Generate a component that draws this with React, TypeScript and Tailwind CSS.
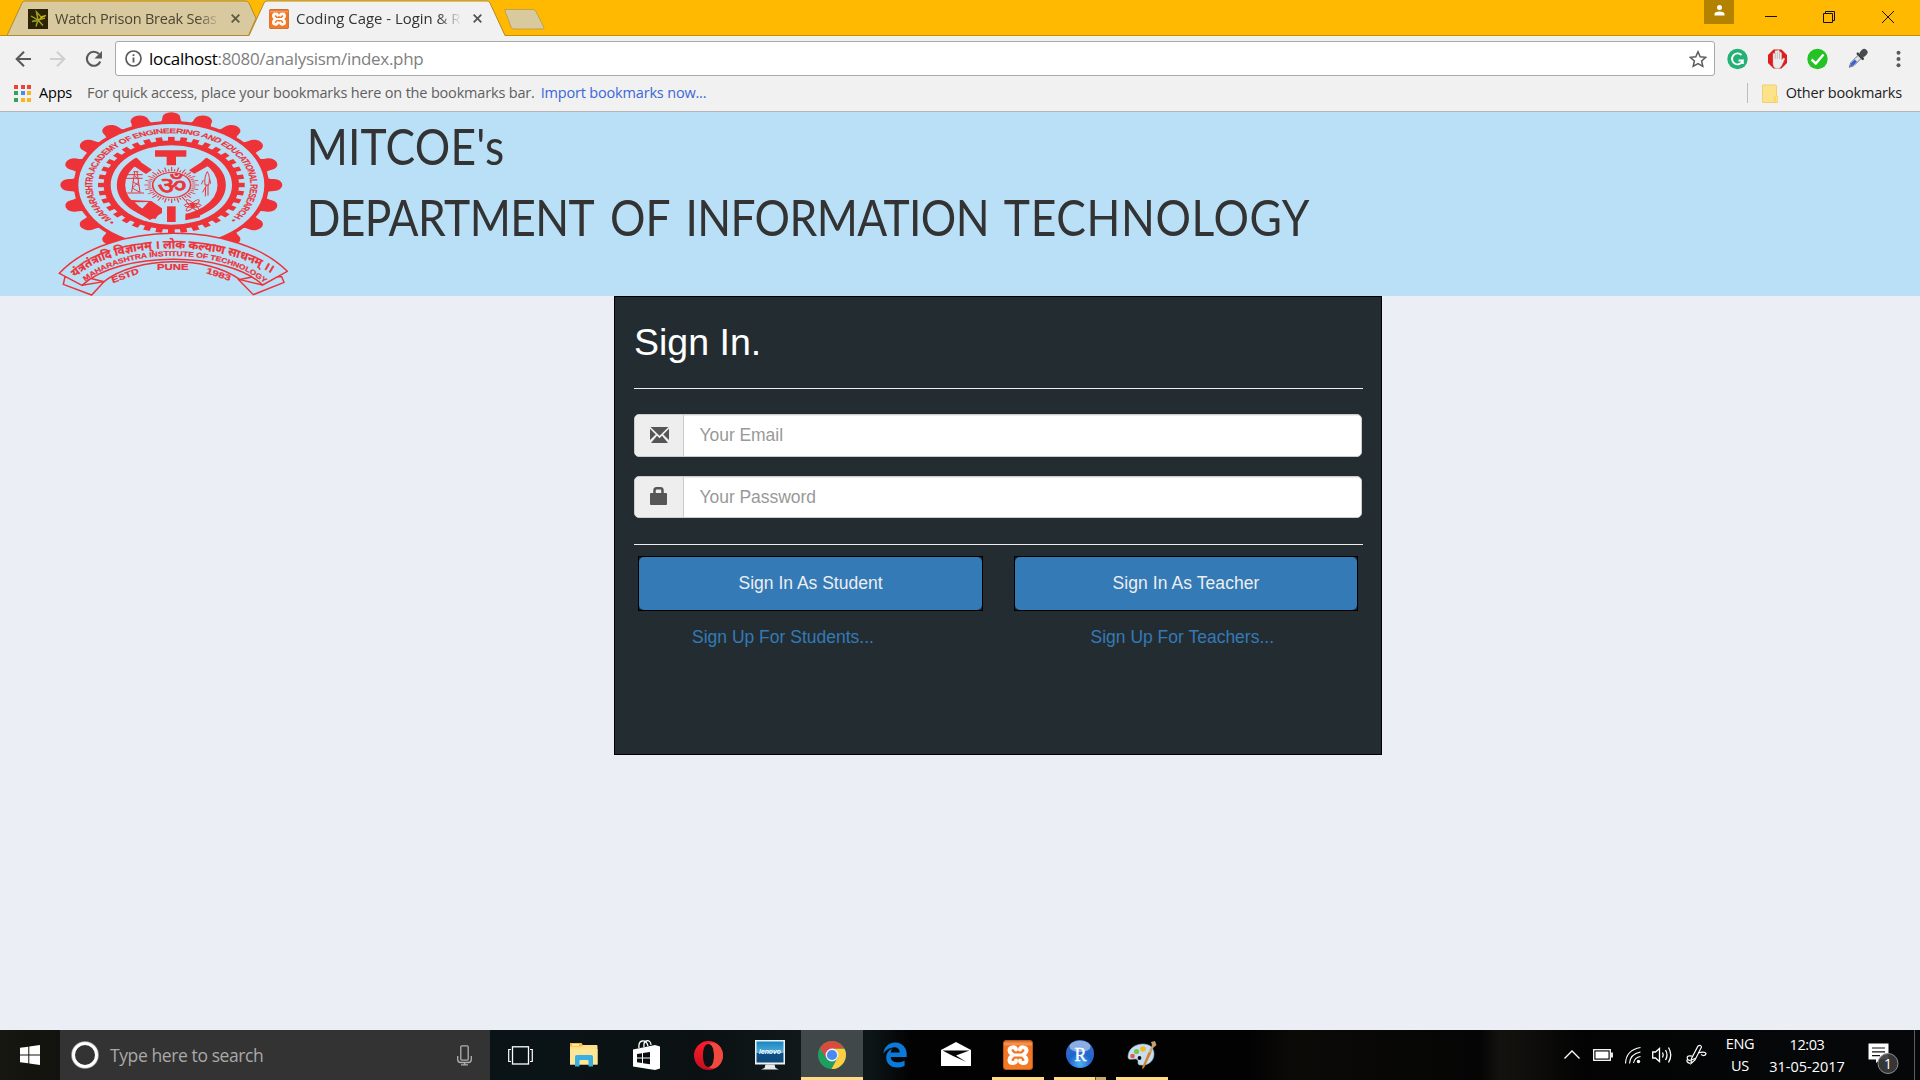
import React from "react";

const tabFade = "[mask-image:linear-gradient(to_right,black_84%,transparent_98%)]";

function XamppMark({ size, id }: { size: number; id: string }) {
  return (
    <svg width={size} height={size} viewBox="0 0 30 30">
      <defs>
        <linearGradient id={id} x1="0" y1="0" x2="0" y2="1">
          <stop offset="0" stopColor="#d4621c" />
          <stop offset="0.12" stopColor="#f9995a" />
          <stop offset="0.2" stopColor="#f47320" />
          <stop offset="1" stopColor="#f47a26" />
        </linearGradient>
      </defs>
      <rect x="0.5" y="0.5" width="29" height="29" rx="2.5" fill={`url(#${id})`} stroke="#b9591a" />
      <g stroke="#fff" strokeLinecap="round" fill="none">
        <path d="M13 9.500C13 6.500 6.500 6.500 6.500 10.500C6.500 13.500 9.500 13.500 9.500 15C9.500 16.500 6.500 16.500 6.500 20C6.500 24 13 24 13 20.500" strokeWidth="4" />
        <path d="M17 9.500C17 6.500 23.500 6.500 23.500 10.500C23.500 13.500 20.500 13.500 20.500 15C20.500 16.500 23.500 16.500 23.500 20C23.500 24 17 24 17 20.500" strokeWidth="4" />
        <path d="M11 15H19" strokeWidth="3" />
      </g>
    </svg>
  );
}

function TabClose({ color }: { color: string }) {
  return (
    <svg width="9" height="9" viewBox="0 0 9 9" stroke={color} strokeWidth="1.800">
      <path d="M0.700 0.700L8.300 8.300M8.300 0.700L0.700 8.300" />
    </svg>
  );
}

function TabStrip() {
  return (
    <div className="relative flex h-9 items-start bg-[#ffb900]">
      <div className="absolute inset-x-0 bottom-0 h-px bg-[#c08e10]" />
      <div className="relative ml-[7px] h-9 w-[242px]">
        <svg className="absolute top-0 left-0" width="252" height="36" viewBox="0 0 252 36">
          <path d="M0 35.500L15 3Q16 1 18 1H238Q241 1 242 3L249 18.500L241.500 35.500Z" fill="#d9c99f" stroke="#b08a2c" />
        </svg>
        <div className="relative flex h-[37px] items-center pl-[21px]">
          <svg width="20" height="20" viewBox="0 0 20 20">
            <rect width="20" height="20" fill="#2c2306" />
            <path d="M10 11L8.500 3L13 8L18 6.500M10 11L3 7M10 11L4 12.500M10 11L8 17.500M10 11L15 16.500M10 11L17 9" stroke="#a8a418" strokeWidth="1.400" fill="none" />
            <path d="M13 8L18 6.500L10.500 11Z" fill="#e8c71e" />
            <path d="M10 11L4 12.500L9 13Z" fill="#4b8a45" />
          </svg>
          <div className={`ml-[7px] w-[169px] overflow-hidden text-[14.5px] tracking-[-0.22px] whitespace-nowrap text-[#4b4532] ${tabFade}`}>Watch Prison Break Seas</div>
          <div className="ml-[7px]"><TabClose color="#5f5845" /></div>
        </div>
      </div>
      <div className="relative h-9 w-[256px]">
        <svg className="absolute top-0 left-0" width="258" height="36" viewBox="0 0 258 36">
          <path d="M0 36L15 3Q16 1 18 1H238Q240 1 241 3L256 36Z" fill="#f1f1f1" />
          <path d="M0 35.500L15 3Q16 1 18 1H238Q240 1 241 3L256 35.500" fill="none" stroke="#b4892c" />
        </svg>
        <div className="relative flex h-[37px] items-center pl-5">
          <XamppMark size={20} id="xampp-tab" />
          <div className={`ml-[7px] w-[169px] overflow-hidden text-[14.9px] whitespace-nowrap text-[#333] ${tabFade}`}>Coding Cage - Login &amp; R</div>
          <div className="ml-[8px]"><TabClose color="#555" /></div>
        </div>
      </div>
      <svg className="mt-[9px] -ml-[2px]" width="43" height="21" viewBox="0 0 43 21">
        <path d="M1.500 0.500H30Q32 0.500 33 2.500L41 18.500Q41 20 39 20H11Q9 20 8 18Z" fill="#d9c99f" stroke="#c2a04e" />
      </svg>
      <div className="ml-auto flex h-full items-start">
        <div className="flex h-6 w-[30px] items-start justify-center bg-[#b38200] pt-[5px]">
          <svg width="11" height="11" viewBox="0 0 11 11" fill="#fff">
            <circle cx="5.500" cy="2.600" r="2.500" />
            <path d="M0.500 10.500V9Q0.500 6.500 5.500 6.500T10.500 9V10.500Z" />
          </svg>
        </div>
        <svg className="ml-[31px]" width="130" height="30" viewBox="0 0 130 30" fill="none" stroke="#111" strokeWidth="1">
          <path d="M0 16.500H12M58.500 13.500H67.500V22.500H58.500ZM60.500 13V11.500H69.500V20.500H68M117 11L129 23M129 11L117 23" />
        </svg>
        <div className="w-[25px]" />
      </div>
    </div>
  );
}

function Toolbar() {
  return (
    <div className="flex h-10 items-center bg-[#f1f1f1] pt-[5px] pl-[15px]">
      <svg width="88" height="18" viewBox="0 0 88 18" fill="none" strokeWidth="2.100">
        <path d="M16 9H2M9 1.700L1.700 9L9 16.300" stroke="#5a5a5a" />
        <path d="M35 9H49M42 1.700L49.300 9L42 16.300" stroke="#cfcfcf" />
        <path d="M84 4A7 7 0 1 0 85.300 11.500" stroke="#5a5a5a" />
        <path d="M87 1V8.500H79.500Z" fill="#5a5a5a" />
      </svg>
      <div className="ml-[12px] flex h-[35px] w-[1600px] items-center rounded-[3px] border border-[#a9a9a9] bg-white pr-[7px] pl-[9px]">
        <svg width="17" height="17" viewBox="0 0 17 17" fill="none" stroke="#5a5a5a">
          <circle cx="8.500" cy="8.500" r="7.500" strokeWidth="1.700" />
          <path d="M8.500 7.500V12.500M8.500 4.200V6" strokeWidth="1.800" />
        </svg>
        <div className="ml-[7px] pt-px text-[17px] tracking-[-0.3px] text-[#808080]">
          <span className="text-black">localhost</span>:8080/analysism/index.php
        </div>
        <svg className="ml-auto" width="18" height="18" viewBox="0 0 18 18" fill="none" stroke="#5a5a5a" strokeWidth="1.500">
          <path d="M9 1.700L11.200 6.700L16.700 7.300L12.600 10.900L13.800 16.300L9 13.500L4.200 16.300L5.400 10.900L1.300 7.300L6.800 6.700Z" />
        </svg>
      </div>
      <svg className="ml-[12px]" width="190" height="22" viewBox="0 0 190 22">
        <circle cx="10.500" cy="11" r="10.200" fill="#23b176" />
        <path d="M14.500 7A5.500 5.500 0 1 0 15.800 12.500H11.500M15.800 12V16" fill="none" stroke="#fff" strokeWidth="1.900" />
        <path d="M46.500 1.500H54.500L60 7V15L54.500 20.500H46.500L41 15V7Z" fill="#e01d1d" />
        <path d="M46 12V5.500Q47 4.500 48 5.500V3Q49 2 50.200 3V2.500Q51.400 1.500 52.500 3V4.500Q53.500 3.500 54.600 5V12L56.500 10Q58 9.500 57.500 11.500L54.500 18Q53 20.500 50 20.500Q46 20 46 16Z" fill="#ececec" stroke="#bbb" strokeWidth="0.400" />
        <path d="M48.200 5V11M50.300 4V11M52.500 5V11" stroke="#a99" strokeWidth="0.600" />
        <circle cx="90.500" cy="11" r="10.200" fill="#22c322" />
        <path d="M84.500 11.500L88.800 15.500L96.500 6.500" fill="none" stroke="#fff" strokeWidth="2.400" />
        <g transform="translate(131 10.500) rotate(45)">
          <path d="M-2.200 -2.500H2.200V8L0 12.500L-2.200 8Z" fill="#dce3ef" stroke="#777" strokeWidth="0.900" />
          <path d="M-1.600 3H1.600V8L0 11.500L-1.600 8Z" fill="#3a63d2" />
          <rect x="-4.800" y="-4.500" width="9.600" height="2.600" rx="1.200" fill="#444" />
          <rect x="-3.300" y="-12" width="6.600" height="8" rx="3" fill="#4b4b4f" />
        </g>
        <g fill="#5a5a5a">
          <circle cx="171.500" cy="4.700" r="2" /><circle cx="171.500" cy="11" r="2" /><circle cx="171.500" cy="17.300" r="2" />
        </g>
      </svg>
    </div>
  );
}

const appDots = ["#ef4136", "#ef4136", "#ef4136", "#34a05a", "#3f8ef0", "#fbb51c", "#34a05a", "#fbb51c", "#fbb51c"];

function BookmarksBar() {
  return (
    <div className="flex h-9 items-center border-b border-[#b6b4b6] bg-[#f1f1f1] pb-px pl-[14px] text-[14.5px] tracking-[-0.18px]">
      <div className="grid grid-cols-3 gap-x-[2.500px] gap-y-[2.500px]">
        {appDots.map((c, i) => (
          <div key={i} className="size-[4px]" style={{ backgroundColor: c }} />
        ))}
      </div>
      <span className="ml-[8px] text-black">Apps</span>
      <span className="ml-[15px] text-[#5f5f5f]">For quick access, place your bookmarks here on the bookmarks bar.</span>
      <span className="ml-[6px] text-[#3b66da]">Import bookmarks now...</span>
      <div className="ml-auto h-5 w-px bg-[#bdbdbd]" />
      <svg className="ml-[14px]" width="16" height="19" viewBox="0 0 16 19">
        <path d="M0.500 1H13.500Q14.500 1 14.500 2V11.500L16 13V17.500Q16 18.500 15 18.500H0.500Z" fill="#fde28c" stroke="#f0d072" />
        <path d="M11.500 18V13.500Q11.500 11.500 14 11.500V18Z" fill="#fbd76c" />
      </svg>
      <span className="mr-[18px] ml-[8px] text-[#222]">Other bookmarks</span>
    </div>
  );
}

function Crest() {
  const outer = Array.from({ length: 20 }, (_, i) => i * 18).filter((a) => a < 154 || a > 206);
  const inner = Array.from({ length: 36 }, (_, i) => i * 10);
  const rays = Array.from({ length: 48 }, (_, i) => i * 7.5);
  const red = "#ee3338";
  const sky = "#b9e0f7";
  return (
    <svg width="230" height="184" viewBox="54 21 690 552">
      <defs>
        <path id="crest-ring" d="M-167.600 167.600A237 237 0 1 1 167.600 167.600" />
        <path id="crest-motto" d="M106 518C225 402 560 400 712 518" />
        <path id="crest-inst" d="M136 530C260 427 535 427 668 530" />
        <path id="crest-estd" d="M218 535L302 504" />
        <path id="crest-year" d="M497 504L572 529" />
      </defs>
      <g transform="translate(394 240) scale(1 0.656)">
        {outer.map((a) => (
          <path key={a} d="M-38 -280Q-27 -290 -27 -308A27 25 0 0 1 27 -308Q27 -290 38 -280Z" fill={red} transform={`rotate(${a})`} />
        ))}
        <circle r="293" fill={red} />
        <circle r="279" fill={sky} />
        {inner.map((a) => (
          <rect key={a} x="-10" y="-220" width="20" height="26" fill={red} transform={`rotate(${a})`} />
        ))}
        <circle r="203" fill={red} />
        <circle r="182" fill={sky} />
        <circle r="151" fill="none" stroke={red} strokeWidth="25" />
        <text fill={red} stroke={red} strokeWidth="0.600" fontFamily="Liberation Sans" fontWeight="700" fontSize="31">
          <textPath href="#crest-ring" textLength="1105">• MAHARASHTRA ACADEMY OF ENGINEERING AND EDUCATIONAL RESEARCH •</textPath>
        </text>
      </g>
      <path d="M288 157L310 140L350 127H438L478 140L500 157L464 190L430 200H356L324 190Z" fill={sky} />
      <path d="M340 352L374 300H414L438 330V352Z" fill={sky} />
      <g fill={red}>
        <path d="M345 136H439V155H408V181H380V155H345Z" />
        <path d="M381 304H407V351H381Z" />
        <path d="M285 160L336 194L318 207L268 174Z" />
        <path d="M502 160L447 196L463 206L520 174Z" />
        <path d="M259 284L334 288L366 310V324L330 345L290 322ZM284 292L306 312L325 291Z" fillRule="evenodd" />
        <path d="M436 330H480V337L436 346Z" />
      </g>
      <g stroke={red} fill="none" strokeWidth="3">
        <path d="M284 200L275 262M291 200L300 262M280 200H295M258 209H308M258 220H308M262 264H312M278 230L298 242M297 230L276 250M278 250L300 262M283 212L294 222" />
        <path d="M495 240Q492 215 502 200Q512 215 506 240ZM500 240L488 262M504 240V272M497 246L496 274M490 225L484 238M509 222L512 236" />
        <ellipse cx="458" cy="301" rx="25" ry="6" />
        <ellipse cx="458" cy="301" rx="25" ry="6" transform="rotate(40 458 301)" />
        <ellipse cx="458" cy="301" rx="25" ry="6" transform="rotate(-40 458 301)" />
      </g>
      <circle cx="458" cy="301" r="6" fill={red} />
      <g transform="translate(395 240) scale(1 0.66)">
        {rays.map((a, i) => (
          <line key={a} x1="0" y1="-62" x2="0" y2={i % 2 ? -72 : -82} stroke={red} strokeWidth="3.500" transform={`rotate(${a})`} />
        ))}
        <circle r="57" fill={sky} stroke={red} strokeWidth="5" />
      </g>
      <text transform="translate(396 266) scale(1.300 1)" textAnchor="middle" fill={red} stroke={red} strokeWidth="2" fontFamily="Noto Sans" fontSize="74">ॐ</text>
      <path d="M75 515L70 538L155 570L192 530L150 520Z" fill={sky} stroke={red} strokeWidth="4.500" />
      <path d="M725 515L732 532L640 569L596 524L640 515Z" fill={sky} stroke={red} strokeWidth="4.500" />
      <path d="M58 505C205 346 590 346 742 499L668 540C560 437 240 437 126 541Z" fill={sky} stroke={red} strokeWidth="4.500" />
      <path d="M126 541L192 530C290 453 500 450 600 524L668 540" fill="none" stroke={red} strokeWidth="4.500" />
      <text fill={red} stroke={red} strokeWidth="0.800" fontFamily="Noto Sans" fontWeight="700" fontSize="35.500">
        <textPath href="#crest-motto">यंत्रतंत्रादि विज्ञानम् । लोक कल्याण साधनम् ।।</textPath>
      </text>
      <g fill={red} stroke={red} strokeWidth="0.700" fontFamily="Liberation Sans" fontWeight="700">
        <text fontSize="21"><textPath href="#crest-inst" textLength="572" lengthAdjust="spacingAndGlyphs">MAHARASHTRA INSTITUTE OF TECHNOLOGY</textPath></text>
        <text fontSize="25"><textPath href="#crest-estd" textLength="86" lengthAdjust="spacingAndGlyphs">ESTD</textPath></text>
        <text fontSize="25" x="351" y="495" textLength="95" lengthAdjust="spacingAndGlyphs">PUNE</text>
        <text fontSize="25"><textPath href="#crest-year" textLength="76" lengthAdjust="spacingAndGlyphs">1983</textPath></text>
      </g>
    </svg>
  );
}

function Header() {
  return (
    <header className="flex h-[184px] bg-[#b9e0f7] pl-[58px]">
      <Crest />
      <div className="ml-[16px] pt-px font-['Lato',sans-serif] text-[50px] whitespace-nowrap text-[#333]">
        <div className="h-[67px] origin-left scale-x-[0.887] pl-[3px] leading-[67px] tracking-[0.2px]">MITCOE's</div>
        <div className="flex h-[75px] origin-left scale-x-[0.887] pl-[3px] leading-[75px]">
          <span className="w-[342px] tracking-[-0.7px]">DEPARTMENT</span>
          <span className="w-[85px]">OF</span>
          <span className="w-[359px] tracking-[-0.7px]">INFORMATION</span>
          <span className="tracking-[0.7px]">TECHNOLOGY</span>
        </div>
      </div>
    </header>
  );
}

function Field({ icon, label, className }: { icon: React.ReactNode; label: string; className: string }) {
  return (
    <div className={`flex overflow-hidden rounded-[5px] border border-[#ccc] bg-white ${className}`}>
      <div className="flex w-[49px] items-center justify-center border-r border-[#ccc] bg-[#eee]">{icon}</div>
      <div className="flex flex-1 items-center pl-[15.5px] text-[17.5px] tracking-[-0.05px] text-[#999] shadow-[inset_0_1px_1px_rgba(0,0,0,0.075)]">{label}</div>
    </div>
  );
}

function SignInCard() {
  return (
    <section className="ml-[614px] h-[459px] w-[768px] border border-black bg-[#232d31] pr-[18px] pl-[19px] font-['Liberation_Sans',Arial,sans-serif]">
      <h2 className="h-[91px] text-[37.5px] leading-[91px] text-white">Sign In.</h2>
      <div className="h-px bg-[#eee]" />
      <Field
        className="mt-[25px] mr-px h-[43px]"
        label="Your Email"
        icon={
          <svg className="-mt-px" width="19" height="16" viewBox="0 0 19 16" fill="#555">
            <path d="M0.500 0H18.500L9.500 8.800ZM0 1.800L5.700 7.400L0 13ZM19 1.800L13.300 7.400L19 13ZM1 16L7 8.700L9.500 11.200L12 8.700L18 16Z" />
          </svg>
        }
      />
      <Field
        className="mt-[19px] mr-px h-[42px]"
        label="Your Password"
        icon={
          <svg className="-mt-[2px] -ml-px" width="17" height="18" viewBox="0 0 17 18" fill="none">
            <rect y="6" width="17" height="12" rx="1" fill="#555" />
            <path d="M4.500 7V3.500Q4.500 1.300 6.700 1.300H10.300Q12.500 1.300 12.500 3.500V7" stroke="#555" strokeWidth="2.500" />
          </svg>
        }
      />
      <div className="mt-[26px] h-px bg-[#eee]" />
      <div className="mt-[11px] flex gap-[31px] pl-1 text-[17.5px] text-[#eee]">
        <div className="h-[55px] w-[345px] border border-black bg-[#1b2529]">
          <div className="flex h-full items-center justify-center rounded-[5px] bg-[#337ab7]">Sign In As Student</div>
        </div>
        <div className="h-[55px] w-[344px] border border-black bg-[#1b2529]">
          <div className="flex h-full items-center justify-center rounded-[5px] bg-[#337ab7] tracking-[0.08px]">Sign In As Teacher</div>
        </div>
      </div>
      <div className="flex h-[52px] items-center pl-[58px] text-[17.5px] text-[#337ab7]">
        <a className="w-[398.500px]">Sign Up For Students...</a>
        <a>Sign Up For Teachers...</a>
      </div>
    </section>
  );
}

function ChromeLogo() {
  return (
    <svg width="28" height="28" viewBox="0 0 28 28">
      <circle cx="14" cy="14" r="14" fill="#1da05f" />
      <path d="M14 14L1.900 7A14 14 0 0 1 26.100 7L14 8Z" fill="#db4a3e" />
      <path d="M1.900 7L8.500 17.500L14 14L12 7Z" fill="#db4a3e" />
      <path d="M14 7.700H26.500A14 14 0 0 1 13.500 28L20 16Z" fill="#fdcd42" />
      <circle cx="14" cy="14" r="6.400" fill="#f2f2f2" />
      <circle cx="14" cy="14" r="5.100" fill="#4a89f3" />
    </svg>
  );
}

function TaskSlot({ children, state }: { children: React.ReactNode; state?: "active" | "open" | "stacked" }) {
  return (
    <div className={`relative flex h-[50px] w-[62px] items-center justify-center ${state === "active" ? "bg-[#414849]" : ""}`}>
      {children}
      {state === "active" && <div className="absolute inset-x-0 bottom-0 h-[3px] bg-[#fddc85]" />}
      {state === "open" && <div className="absolute inset-x-[5px] bottom-0 h-[3px] bg-[#fddc85]" />}
      {state === "stacked" && (
        <div className="absolute inset-x-[5px] bottom-0 flex h-[3px] bg-[#fddc85]">
          <div className="ml-auto w-[11px] border-l border-[#5d5336] bg-[#c7ad68]" />
        </div>
      )}
    </div>
  );
}

function Taskbar() {
  return (
    <footer className="flex h-[50px] items-center bg-[linear-gradient(to_right,#171711_0px,#12120e_60px,#0a1417_490px,#0b1113_700px,#101819_800px,#0d1617_870px,#020203_910px,#020203_1250px,#0b0a07_1290px,#050505_1480px,#14120e_1500px,#0f0e0c_1530px,#030303_1580px,#050708_1800px,#050708_1920px)] text-white">
      <div className="flex h-full w-[60px] items-center justify-center">
        <svg width="20" height="20" viewBox="0 0 20 20" fill="#fff">
          <path d="M0 2.800L8.300 1.700V9.500H0ZM9.300 1.500L20 0V9.500H9.300ZM0 10.500H8.300V18.300L0 17.200ZM9.300 10.500H20V20L9.300 18.500Z" />
        </svg>
      </div>
      <div className="flex h-full w-[430px] items-center bg-[#333] pl-[11px]">
        <svg width="28" height="28" viewBox="0 0 28 28" fill="none">
          <circle cx="14" cy="14" r="12.800" stroke="#a8a8a8" strokeWidth="2" />
          <circle cx="14" cy="14" r="11.500" stroke="#fff" strokeWidth="3" />
        </svg>
        <span className="ml-[11px] text-[17.5px] tracking-[-0.4px] text-[#a9a9a9]">Type here to search</span>
        <svg className="mr-[18px] ml-auto" width="15" height="21" viewBox="0 0 15 21" fill="none" stroke="#b0b0b0" strokeWidth="1.300">
          <rect x="3.800" y="0.800" width="7.400" height="14.400" rx="1.200" />
          <path d="M0.700 11V14.500Q0.700 17.500 3.700 17.500H11.300Q14.300 17.500 14.300 14.500V11M7.500 17.500V19.800M4 19.800H11" />
        </svg>
      </div>
      <div className="w-px" />
      <TaskSlot>
        <svg className="-ml-[3px]" width="25" height="19" viewBox="0 0 25 19" fill="none" stroke="#fff">
          <rect x="4.500" y="0.800" width="16" height="17.200" strokeWidth="1.300" />
          <path d="M3 3.500H0.700V15.500H3M22 3.500H24.300V15.500H22" strokeWidth="1.200" />
        </svg>
      </TaskSlot>
      <TaskSlot>
        <svg className="-mt-px" width="28" height="24" viewBox="0 0 28 24">
          <path d="M0 1Q0 0 1 0H11Q12 0 12.500 2H26.500Q27.500 2 27.500 3V21.500H0Z" fill="#fddf8a" />
          <path d="M0 1Q0 0 1 0H11Q12 0 12.500 2V3.500H0Z" fill="#f3bf38" />
          <rect x="2" y="1.200" width="7" height="1.500" fill="#fff3c4" />
          <path d="M0 6H27.500V21.500H0Z" fill="#ffe596" />
          <path d="M5 23.500V14Q5 12 7 12H21Q23 12 23 14V23.500H18.500V18Q18.500 17 17.500 17H10.500Q9.500 17 9.500 18V23.500Z" fill="#3aafe4" />
        </svg>
      </TaskSlot>
      <TaskSlot>
        <svg width="27" height="30" viewBox="0 0 27 30">
          <path d="M6 8C5 -1 13 -1 15 6M11 7C10 -1 18 -1 18 5" fill="none" stroke="#fff" strokeWidth="1.300" />
          <path d="M0 9.500L22 5L27 6.500V28.500L22 30L0 26.500Z" fill="#fff" />
          <path d="M4 14L9 13.200V17.500H4ZM10 13L17 11.900V17.500H10ZM4 18.500H9V23L4 22.300ZM10 18.500H17V24.300L10 23.200Z" fill="#0a0e10" />
        </svg>
      </TaskSlot>
      <TaskSlot>
        <svg width="29" height="29" viewBox="0 0 29 29">
          <defs>
            <linearGradient id="opera-face" x1="0" y1="0" x2="0" y2="1">
              <stop offset="0" stopColor="#ff1b2d" />
              <stop offset="1" stopColor="#c1101f" />
            </linearGradient>
          </defs>
          <path d="M14.500 0A14.500 14.500 0 1 0 14.500 29A14.500 14.500 0 1 0 14.500 0ZM14.500 3C18.500 3 20 8.500 20 14.500S18.500 26 14.500 26S9 20.500 9 14.500S10.500 3 14.500 3Z" fill="url(#opera-face)" />
          <path d="M14.500 3C18.500 3 20 8.500 20 14.500S18.500 26 14.500 26Q19 29 24 25.500A14.500 14.500 0 0 0 24 3.500Q19 0 14.500 3Z" fill="#f0493f" />
        </svg>
      </TaskSlot>
      <TaskSlot>
        <svg width="30" height="30" viewBox="0 0 30 30">
          <defs>
            <linearGradient id="screen" x1="0" y1="0" x2="0" y2="1">
              <stop offset="0" stopColor="#1788c4" />
              <stop offset="0.550" stopColor="#55acd8" />
              <stop offset="0.560" stopColor="#0f4f86" />
              <stop offset="1" stopColor="#0e4a7c" />
            </linearGradient>
          </defs>
          <rect width="30" height="24.500" fill="#edf1f3" />
          <rect x="1.500" y="1.500" width="27" height="21" fill="url(#screen)" />
          <text x="15" y="14" textAnchor="middle" fontFamily="Liberation Sans" fontWeight="700" fontStyle="italic" fontSize="6.800" fill="#fff">lenovo</text>
          <path d="M10.500 24.500H19.500L20.500 28L24 29.500H6L9.500 28Z" fill="#e6e9ea" />
        </svg>
      </TaskSlot>
      <TaskSlot state="active"><ChromeLogo /></TaskSlot>
      <TaskSlot>
        <svg className="ml-px" width="26" height="26" viewBox="16 0 480 512" fill="#0a7bdb">
          <path d="M25.714 228.163c.111-.162.230-.323.342-.485-.021.162-.045.323-.065.485h-.277zm460.572 15.508c0-44.032-7.754-84.465-28.801-122.405C416.498 47.879 343.912 8.001 258.893 8.001 118.962 7.724 40.617 113.214 26.056 227.679c42.429-61.312 117.073-121.376 220.375-124.966 0 0 109.666 0 99.419 104.957H169.997c6.369-37.386 18.554-58.986 34.339-78.926-75.050 34.900-121.850 96.096-120.742 188.315.830 71.448 50.130 144.836 120.743 171.976 83.357 31.847 192.776 7.200 240.132-21.324V363.307c-80.864 56.494-270.871 60.925-272.255-67.572h314.073v-52.064z" />
        </svg>
      </TaskSlot>
      <TaskSlot>
        <svg className="-mt-[2px]" width="30" height="24" viewBox="0 0 30 24">
          <path d="M0 8L15 0L30 8V24H0Z" fill="#fff" />
          <path d="M1.500 8.500H28.500L15 13.500L25 19.800L11.500 13.800Z" fill="#050505" />
        </svg>
      </TaskSlot>
      <TaskSlot state="open"><XamppMark size={30} id="xampp-task" /></TaskSlot>
      <TaskSlot state="stacked">
        <svg className="-mt-[2px] -ml-px" width="28" height="28" viewBox="0 0 28 28">
          <defs>
            <radialGradient id="r-ball" cx="0.500" cy="0.850" r="0.800">
              <stop offset="0" stopColor="#4db3f5" />
              <stop offset="0.500" stopColor="#2064d0" />
              <stop offset="1" stopColor="#3a6fc4" />
            </radialGradient>
          </defs>
          <circle cx="14" cy="14" r="14" fill="url(#r-ball)" />
          <ellipse cx="14" cy="6.500" rx="10.500" ry="5.800" fill="#b9d2f2" opacity="0.650" />
          <text x="14.500" y="20.500" textAnchor="middle" fontFamily="Liberation Serif" fontSize="18" fill="#fff" stroke="#fff" strokeWidth="0.400">R</text>
        </svg>
      </TaskSlot>
      <TaskSlot state="open">
        <svg width="30" height="30" viewBox="0 0 30 30">
          <path d="M1 17C1 9 8 4 16 4C23 4 27 8 27 14C27 22 20 26 13 25C9 24.500 13 20 9 19C6 18.500 1 21 1 17Z" fill="#c5def0" stroke="#8ab0cc" strokeWidth="0.600" />
          <circle cx="12.500" cy="18" r="1.900" fill="#0b0b0b" />
          <circle cx="5.500" cy="16" r="2.300" fill="#e35b4a" />
          <circle cx="9.500" cy="11.500" r="2.600" fill="#7dc24c" />
          <circle cx="16" cy="9" r="2.800" fill="#f5b922" />
          <path d="M21.500 12L24.500 12.500L17 28L15 29L15.500 26.500Z" fill="#d9822b" />
          <path d="M22 11.500L25 5L24 2L28 1L29.500 5L26.500 7.500L24.500 12.500Z" fill="#c6a06f" />
        </svg>
      </TaskSlot>
      <svg className="ml-[391px]" width="145" height="24" viewBox="0 0 145 24" fill="none" stroke="#fff" strokeWidth="1.300">
        <path d="M0.500 15.500L8 8L15.500 15.500" />
        <rect x="29.700" y="6.700" width="16.600" height="10.600" />
        <rect x="31.500" y="8.500" width="13" height="7" fill="#fff" stroke="none" />
        <path d="M48 9.500V14.500" strokeWidth="1.800" />
        <path d="M61.500 20.500Q62 7 76.500 4.500M65.500 20.500Q66 11 76.500 9M69.500 20Q70.500 14.500 76.500 13.500" strokeWidth="1.100" />
        <circle cx="74.500" cy="18.500" r="1.700" fill="#fff" stroke="none" />
        <path d="M88.700 9H91.500L95.500 5.500V18.500L91.500 15H88.700ZM98.500 9.500Q100 12 98.500 14.500M101.500 7Q104.500 12 101.500 17M104.500 4.500Q109 12 104.500 19.500" />
        <path d="M134 3Q137 1.500 137.500 4L131 17L127 20.500L127.500 15.500ZM128 13Q122 12 123.500 16Q125 19 132 15M134 10Q141 8 142 10.500Q141 14 137 11.500M123.500 16Q121.500 19 126 20.500" strokeWidth="1.200" />
      </svg>
      <div className="ml-[13px] w-[36px] text-center text-[14.5px] leading-[22px] tracking-[-0.3px]">
        <div>ENG</div>
        <div>US</div>
      </div>
      <div className="ml-px w-[96px] pt-px text-center text-[14.5px] leading-[22px]">
        <div className="tracking-[-0.4px]">12:03</div>
        <div>31-05-2017</div>
      </div>
      <svg className="mt-[7px] ml-[13px]" width="32" height="32" viewBox="0 0 32 32">
        <path d="M0.500 0.500H20.500V16.500H12L8 20V16.500H0.500Z" fill="#fff" />
        <path d="M4 5H17M4 8.800H17M4 12.600H12" stroke="#111" strokeWidth="1.200" />
        <circle cx="20" cy="20.500" r="10" fill="#3b3b3b" fillOpacity="0.920" stroke="#8f8f8f" />
        <text x="20" y="25.500" textAnchor="middle" fontFamily="Open Sans" fontSize="14" fill="#fff">1</text>
      </svg>
      <div className="ml-auto h-full w-[6px] border-l border-[#5c5c5c]" />
    </footer>
  );
}

export default function App() {
  return (
    <div className="flex h-[1080px] w-[1920px] flex-col overflow-hidden bg-[#ebeef4] font-['Open_Sans','Noto_Sans',sans-serif]">
      <TabStrip />
      <Toolbar />
      <BookmarksBar />
      <Header />
      <main className="flex-1"><SignInCard /></main>
      <Taskbar />
    </div>
  );
}
